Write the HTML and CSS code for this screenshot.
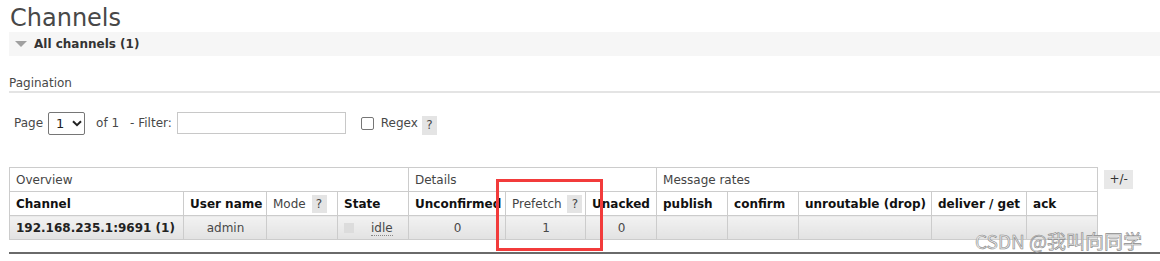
FILE: index.html
```html
<!DOCTYPE html>
<html>
<head>
<meta charset="utf-8">
<link rel="stylesheet" href="styles.css">
</head>
<body>
<h1 class="title">Channels</h1>
<div class="section-bar"><span class="tri"></span><span class="section-name">All channels (1)</span></div>
<div class="pagination-head">Pagination</div>
<div class="page-row">
  <span>Page</span>
  <span class="select">1<svg class="chev" width="10" height="7" viewBox="0 0 10 7"><path d="M1 1.2 L5 5.2 L9 1.2" fill="none" stroke="#222" stroke-width="2"/></svg></span>
  <span class="of">of 1</span>
  <span class="filter-label">- Filter:</span>
  <span class="filter-input"></span>
  <span class="checkbox"></span>
  <span class="regex">Regex</span>
  <span class="help">?</span>
</div>
<div class="table-wrap">
  <table class="list">
    <colgroup>
      <col class="c174"><col class="c83"><col class="c71"><col class="c71"><col class="c97"><col class="c80"><col class="c71"><col class="c71"><col class="c71"><col class="c133"><col class="c95"><col class="c71">
    </colgroup>
    <tr class="group">
      <th colspan="4">Overview</th>
      <th colspan="3">Details</th>
      <th colspan="5">Message rates</th>
    </tr>
    <tr class="heads">
      <th>Channel</th>
      <th>User name</th>
      <th class="plain">Mode <span class="help in">?</span></th>
      <th>State</th>
      <th>Unconfirmed</th>
      <th class="plain">Prefetch <span class="help in">?</span></th>
      <th>Unacked</th>
      <th>publish</th>
      <th>confirm</th>
      <th>unroutable (drop)</th>
      <th>deliver / get</th>
      <th>ack</th>
    </tr>
    <tr class="data">
      <td class="name">192.168.235.1:9691 (1)</td>
      <td class="c">admin</td>
      <td></td>
      <td class="state"><span class="sq"></span><span class="idle">idle</span></td>
      <td class="c">0</td>
      <td class="c">1</td>
      <td class="c">0</td>
      <td></td>
      <td></td>
      <td></td>
      <td></td>
      <td></td>
    </tr>
  </table>
  <span class="toggle">+/-</span>
</div>
<div class="bottom-line"></div>
<div class="highlight"></div>
<div class="watermark">CSDN @我叫向同学</div>
</body>
</html>
```

FILE: styles.css
```css
html, body {
  margin: 0;
  padding: 0;
  background: #fff;
}
body {
  font-family: "DejaVu Sans", Verdana, sans-serif;
  font-size: 12px;
  color: #484848;
  padding-left: 9px;
  position: relative;
  width: 1151px;
  height: 261px;
  overflow: hidden;
}
.title {
  margin: 5px 0 0 1px;
  font-size: 24px;
  font-weight: normal;
  line-height: 27px;
  color: #484848;
}
.section-bar {
  height: 24px;
  background: #f6f6f6;
  display: flex;
  align-items: center;
}
.tri {
  width: 0;
  height: 0;
  border-left: 6px solid transparent;
  border-right: 6px solid transparent;
  border-top: 6px solid #a0a0a0;
  margin-left: 6px;
  margin-right: 7px;
}
.section-name {
  font-weight: bold;
  color: #333;
}
.pagination-head {
  margin-top: 19px;
  height: 16px;
  line-height: 16px;
  border-bottom: 2px solid #e4e4e4;
}
.page-row {
  display: flex;
  align-items: center;
  margin-top: 18px;
  height: 24px;
  padding-left: 5px;
}
.select {
  box-sizing: border-box;
  width: 37px;
  height: 23px;
  border: 1px solid #767676;
  border-radius: 2px;
  margin-left: 5px;
  padding-left: 7px;
  display: flex;
  align-items: center;
  color: #222;
  font-size: 13px;
}
.chev {
  margin-left: 8px;
}
.of {
  margin-left: 11px;
}
.filter-label {
  margin-left: 11px;
}
.filter-input {
  box-sizing: border-box;
  width: 169px;
  height: 22px;
  border: 1px solid #c8c8c8;
  margin-left: 5px;
}
.checkbox {
  box-sizing: border-box;
  width: 13px;
  height: 13px;
  border: 1px solid #767676;
  border-radius: 2px;
  margin-left: 15px;
}
.regex {
  margin-left: 7px;
}
.help {
  display: inline-block;
  background: #e4e4e4;
  width: 15px;
  height: 19px;
  line-height: 19px;
  text-align: center;
  margin-left: 4px;
  margin-top: 4px;
}
.help.in {
  margin: 0 0 0 2px;
  height: 18px;
  line-height: 18px;
  vertical-align: middle;
}
.table-wrap {
  display: flex;
  align-items: flex-start;
  margin-top: 32px;
}
.list {
  border-collapse: collapse;
  table-layout: fixed;
  width: 1088px;
}
.c174 { width: 174px; }
.c83 { width: 83px; }
.c71 { width: 71px; }
.c97 { width: 97px; }
.c80 { width: 80px; }
.c133 { width: 133px; }
.c95 { width: 95px; }
.list th, .list td {
  border: 1px solid #cccccc;
  height: 23px;
  padding: 0 5px 0 6px;
  white-space: nowrap;
  overflow: hidden;
  text-align: left;
}
.group th {
  font-weight: normal;
  color: #444;
}
.heads th {
  font-weight: bold;
  color: #111;
}
.heads th.plain {
  font-weight: normal;
  color: #444;
}
.data td {
  background: linear-gradient(#f2f2f2, #e2e2e2);
}
.data td.name {
  font-weight: bold;
  color: #222;
}
.data td.c {
  text-align: center;
}
.sq {
  display: inline-block;
  width: 10px;
  height: 10px;
  background: #dcdcdc;
  vertical-align: middle;
  margin-right: 17px;
}
.idle {
  border-bottom: 1px dotted #888;
  vertical-align: middle;
}
.toggle {
  background: #e8e8e8;
  width: 29px;
  height: 19px;
  line-height: 19px;
  text-align: center;
  margin-left: 6px;
  margin-top: 3px;
  color: #333;
}
.bottom-line {
  margin-top: 12px;
  height: 2px;
  background: #6a6a6a;
}
.highlight {
  position: absolute;
  left: 496px;
  top: 179px;
  width: 101px;
  height: 66px;
  border: 3px solid #f23b3b;
}
.watermark {
  position: absolute;
  left: 975px;
  top: 228px;
  font-family: "Noto Sans CJK SC", "DejaVu Sans", sans-serif;
  font-size: 19px;
  line-height: 26px;
  color: #e8e8e8;
  -webkit-text-stroke: 0.6px #8a8a8a;
  white-space: nowrap;
}
```
